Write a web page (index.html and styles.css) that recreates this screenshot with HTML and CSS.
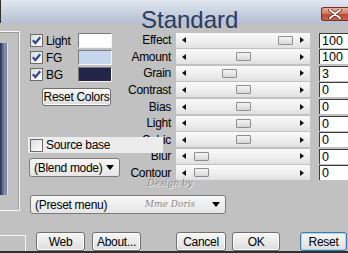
FILE: index.html
```html
<html>
<head>
  <title>Standard</title>
  <link rel="stylesheet" href="styles.css">
</head>
<body>
  <div class="dialog">
    <header class="header">
      <h1 class="title">Standard</h1>
      <button type="button" class="close">
        <svg width="14" height="10" viewBox="0 0 14 10"><path d="M2 1 L12 9 M12 1 L2 9" stroke="#5a1a10" stroke-width="3.4" stroke-linecap="round"/><path d="M2 1 L12 9 M12 1 L2 9" stroke="#fff" stroke-width="2" stroke-linecap="round"/></svg>
      </button>
    </header>

    <div class="main">
      <div class="preview"><div class="preview-img"></div></div>

      <div class="content">
        <div class="upper">
          <div class="left">
            <label class="check-row">
              <span class="cb"><svg width="11" height="11" viewBox="0 0 11 11"><path d="M1.8 5.2 L4.4 8 L9.2 2.2" fill="none" stroke="#2d4a92" stroke-width="2.2"/></svg></span>
              <span class="cb-label">Light</span>
              <span class="swatch swatch-light"></span>
            </label>
            <label class="check-row">
              <span class="cb"><svg width="11" height="11" viewBox="0 0 11 11"><path d="M1.8 5.2 L4.4 8 L9.2 2.2" fill="none" stroke="#2d4a92" stroke-width="2.2"/></svg></span>
              <span class="cb-label">FG</span>
              <span class="swatch swatch-fg"></span>
            </label>
            <label class="check-row">
              <span class="cb"><svg width="11" height="11" viewBox="0 0 11 11"><path d="M1.8 5.2 L4.4 8 L9.2 2.2" fill="none" stroke="#2d4a92" stroke-width="2.2"/></svg></span>
              <span class="cb-label">BG</span>
              <span class="swatch swatch-bg"></span>
            </label>

            <button type="button" class="btn btn-colors">Reset Colors</button>

            <label class="source-row">
              <span class="cb"></span>
              <span class="cb-label">Source base</span>
            </label>

            <div class="select select-blend">
              <span>(Blend mode)</span>
              <span class="arrow"></span>
            </div>
          </div>

          <div class="sliders">
            <div class="slider-row">
              <span class="slider-label">Effect</span>
              <div class="track"><span class="arr arr-left"></span><span class="thumb" style="left: 102px"></span><span class="arr arr-right"></span></div>
              <span class="value">100</span>
            </div>
            <div class="slider-row">
              <span class="slider-label">Amount</span>
              <div class="track"><span class="arr arr-left"></span><span class="thumb" style="left: 60px"></span><span class="arr arr-right"></span></div>
              <span class="value">100</span>
            </div>
            <div class="slider-row">
              <span class="slider-label">Grain</span>
              <div class="track"><span class="arr arr-left"></span><span class="thumb" style="left: 46px"></span><span class="arr arr-right"></span></div>
              <span class="value">3</span>
            </div>
            <div class="slider-row">
              <span class="slider-label">Contrast</span>
              <div class="track"><span class="arr arr-left"></span><span class="thumb" style="left: 60px"></span><span class="arr arr-right"></span></div>
              <span class="value">0</span>
            </div>
            <div class="slider-row">
              <span class="slider-label">Bias</span>
              <div class="track"><span class="arr arr-left"></span><span class="thumb" style="left: 60px"></span><span class="arr arr-right"></span></div>
              <span class="value">0</span>
            </div>
            <div class="slider-row">
              <span class="slider-label">Light</span>
              <div class="track"><span class="arr arr-left"></span><span class="thumb" style="left: 60px"></span><span class="arr arr-right"></span></div>
              <span class="value">0</span>
            </div>
            <div class="slider-row">
              <span class="slider-label">Cubic</span>
              <div class="track"><span class="arr arr-left"></span><span class="thumb" style="left: 60px"></span><span class="arr arr-right"></span></div>
              <span class="value">0</span>
            </div>
            <div class="slider-row">
              <span class="slider-label">Blur</span>
              <div class="track"><span class="arr arr-left"></span><span class="thumb" style="left: 18px"></span><span class="arr arr-right"></span></div>
              <span class="value">0</span>
            </div>
            <div class="slider-row">
              <span class="slider-label">Contour</span>
              <div class="track"><span class="arr arr-left"></span><span class="thumb" style="left: 18px"></span><span class="arr arr-right"></span></div>
              <span class="value">0</span>
            </div>
          </div>
        </div>

        <div class="select select-preset">
          <span>(Preset menu)</span>
          <span class="arrow"></span>
        </div>
      </div>
    </div>

    <footer class="footer">
      <div class="status"></div>
      <button type="button" class="btn btn-web">Web</button>
      <button type="button" class="btn btn-about">About...</button>
      <button type="button" class="btn btn-cancel">Cancel</button>
      <button type="button" class="btn btn-ok">OK</button>
      <button type="button" class="btn btn-reset">Reset</button>
    </footer>

    <div class="watermark">
      <span class="wm-top">Design by</span>
      <span class="wm-bottom">Mme Doris</span>
    </div>
  </div>
</body>
</html>
```

FILE: styles.css
```css
body {
  margin: 0;
  padding: 0;
  background-color: #c1c1c1;
  font-family: "Liberation Sans", Arial, sans-serif;
  font-size: 12px;
  letter-spacing: -0.3px;
  color: black;
}

.dialog {
  position: relative;
  width: 348px;
  height: 253px;
  overflow: hidden;
  background-color: #c1c1c1;
}

/* title band */
.header {
  display: flex;
  align-items: flex-start;
  height: 31px;
  background:
    linear-gradient(#2e2e2e, #2e2e2e) 0 0 / 1px 23px no-repeat,
    linear-gradient(to bottom, #e3e8f0, #c9d2e0 50%, #b4bfd0) 0 0 / 100% 24px no-repeat;
}

.title {
  margin: 8px 0 0 141px;
  font-weight: normal;
  font-size: 24px;
  line-height: 24px;
  letter-spacing: 0;
  color: #2b3b62;
}

.close {
  margin: 7px 0 0 auto;
  width: 27px;
  height: 14px;
  padding: 0;
  display: flex;
  align-items: center;
  justify-content: center;
  border: 1px solid #7b2c20;
  border-right: none;
  border-radius: 3px 0 0 3px;
  background: linear-gradient(to bottom, #e9b3a4, #d27a66 45%, #bd4a35 55%, #c86650);
}

/* body */
.main {
  display: flex;
  height: 201px;
}

.preview {
  width: 19px;
  height: 178px;
  border-top: 1px solid #f8f8f8;
  border-right: 1px solid #f8f8f8;
  border-bottom: 1px solid #f8f8f8;
  box-shadow: inset -1px 1px 0 #9c9c9c;
}

.preview-img {
  width: 7px;
  height: 152px;
  margin-top: 11px;
  border-right: 1px solid #dfe3ea;
  background: linear-gradient(to right, #262c48, #5d6a8e 40%, #8896b4 70%, #6a7799);
}

.content {
  display: flex;
  flex-direction: column;
  margin-left: 8px;
}

.upper {
  display: flex;
  height: 150px;
}

.left {
  width: 100px;
  padding-top: 1px;
  display: flex;
  flex-direction: column;
  align-items: flex-start;
}

.check-row {
  display: flex;
  align-items: center;
  height: 17px;
}

.cb {
  box-sizing: border-box;
  width: 13px;
  height: 13px;
  margin-left: 2px;
  display: flex;
  align-items: center;
  justify-content: center;
  border: 1px solid #6b6b6b;
  background: linear-gradient(135deg, #dcdcdc, #ffffff);
}

.cb-label {
  margin-left: 3px;
  white-space: nowrap;
}

.check-row .cb-label {
  width: 32px;
}

.swatch {
  box-sizing: border-box;
  width: 34px;
  height: 15px;
  border-top: 1px solid #7a7a7a;
  border-left: 1px solid #7a7a7a;
  border-bottom: 1px solid #f4f4f4;
  border-right: 1px solid #f4f4f4;
}

.swatch-light {
  background-color: #ffffff;
}

.swatch-fg {
  background-color: #c6d6ed;
}

.swatch-bg {
  background-color: #222448;
}

.btn {
  box-sizing: border-box;
  height: 19px;
  padding: 0;
  white-space: nowrap;
  font-family: "Liberation Sans", Arial, sans-serif;
  font-size: 12px;
  letter-spacing: -0.3px;
  color: black;
  border: 1px solid #6f6f6f;
  border-radius: 3px;
  background: linear-gradient(to bottom, #f6f6f6, #ebebeb 50%, #dcdcdc);
  box-shadow: inset 0 0 0 1px #fdfdfd;
}

.btn-colors {
  width: 69px;
  height: 18px;
  margin: 5px 0 0 14px;
}

.source-row {
  position: relative;
  z-index: 1;
  display: flex;
  align-items: center;
  width: 135px;
  height: 16px;
  margin-top: 31px;
  background-color: #ececec;
}

.select {
  box-sizing: border-box;
  display: flex;
  align-items: center;
  justify-content: space-between;
  height: 19px;
  padding: 0 5px 0 4px;
  white-space: nowrap;
  border: 1px solid #7a7a7a;
  border-radius: 3px;
  background: linear-gradient(to bottom, #f7f7f7, #e6e6e6);
}

.select-blend {
  width: 91px;
  margin: 5px 0 0 1px;
}

.select-preset {
  width: 196px;
  margin: 14px 0 0 2px;
}

.arrow {
  width: 0;
  height: 0;
  border-left: 4px solid transparent;
  border-right: 4px solid transparent;
  border-top: 5px solid black;
}

/* sliders */
.sliders {
  padding-top: 1px;
  display: flex;
  flex-direction: column;
}

.slider-row {
  display: flex;
  align-items: center;
  height: 16.6px;
}

.slider-label {
  width: 43px;
  text-align: right;
  white-space: nowrap;
}

.track {
  position: relative;
  display: flex;
  align-items: center;
  justify-content: space-between;
  width: 134px;
  height: 15px;
  margin-left: 5px;
  padding: 0 6px;
  box-sizing: border-box;
  background: linear-gradient(to bottom, #fafafa, #ededed 60%, #e0e0e0);
}

.arr {
  width: 0;
  height: 0;
  border-top: 3px solid transparent;
  border-bottom: 3px solid transparent;
}

.arr-left {
  border-right: 4px solid #111;
}

.arr-right {
  border-left: 4px solid #111;
}

.thumb {
  position: absolute;
  top: 3px;
  box-sizing: border-box;
  width: 15px;
  height: 9px;
  border: 1px solid #8e8e8e;
  border-radius: 1px;
  background: linear-gradient(to bottom, #f4f4f4, #d8d8d8);
}

.value {
  box-sizing: border-box;
  width: 29px;
  height: 15px;
  margin-left: 9px;
  padding-left: 2px;
  font-size: 12.5px;
  letter-spacing: 0;
  line-height: 14px;
  background-color: white;
  border-top: 1px solid #3c3c3c;
  border-left: 1px solid #3c3c3c;
}

/* footer */
.footer {
  display: flex;
  align-items: flex-end;
  height: 19px;
  border-bottom: 2px solid #303030;
}

.status {
  width: 25px;
  height: 15px;
  border-top: 1px solid #f4f4f4;
  border-right: 1px solid #f4f4f4;
}

.btn-web {
  width: 49px;
  margin-left: 10px;
}

.btn-about {
  width: 49px;
  margin-left: 7px;
}

.btn-cancel {
  width: 50px;
  margin-left: 35px;
}

.btn-ok {
  width: 48px;
  margin-left: 6px;
}

.btn-reset {
  width: 47px;
  margin-left: 20px;
  border-color: #3d7bad;
  box-shadow: inset 0 0 0 1px #a9d6f3;
}

/* signature over the preset menu */
.watermark {
  position: absolute;
  left: 144px;
  top: 178px;
  width: 52px;
  font-family: "DejaVu Serif", serif;
  font-style: italic;
  font-size: 9px;
  letter-spacing: 0;
  color: #8c8c8c;
  text-shadow: 1px 1px 0 #f0f0f0;
  text-align: center;
}

.wm-top {
  display: block;
}

.wm-bottom {
  display: block;
  margin-top: 11px;
}
```
